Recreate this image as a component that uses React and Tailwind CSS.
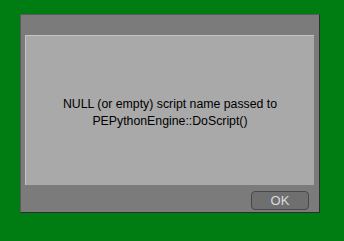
export default function App() {
  return (
    <div className="w-[344px] h-[241px] bg-[#007d12] pt-[14px] pl-[20px]" style={{ fontFamily: '"Liberation Sans", Arial, sans-serif' }}>
      <div className="w-[300px] h-[199px] bg-[#7b7b7b] border border-[#2e2e2e] border-t-[#5a5a5a] border-l-[#5a5a5a] flex flex-col">
        <div className="mt-[20px] ml-[4px] mr-[5px] h-[150px] pt-[4px] bg-[#a9a9a9] border-t border-l border-[#c4c4c4] flex items-center justify-center">
          <p className="text-[12.3px] leading-[17px] text-black text-center">
            NULL (or empty) script name passed to
            <br />
            PEPythonEngine::DoScript()
          </p>
        </div>
        <div className="flex justify-end pr-[10px] pt-[6px]">
          <button className="w-[58px] h-[19px] rounded-[4px] bg-[#6f6f6f] border border-[#484848] text-[#dcdcdc] text-[13px] leading-none">
            OK
          </button>
        </div>
      </div>
    </div>
  );
}
